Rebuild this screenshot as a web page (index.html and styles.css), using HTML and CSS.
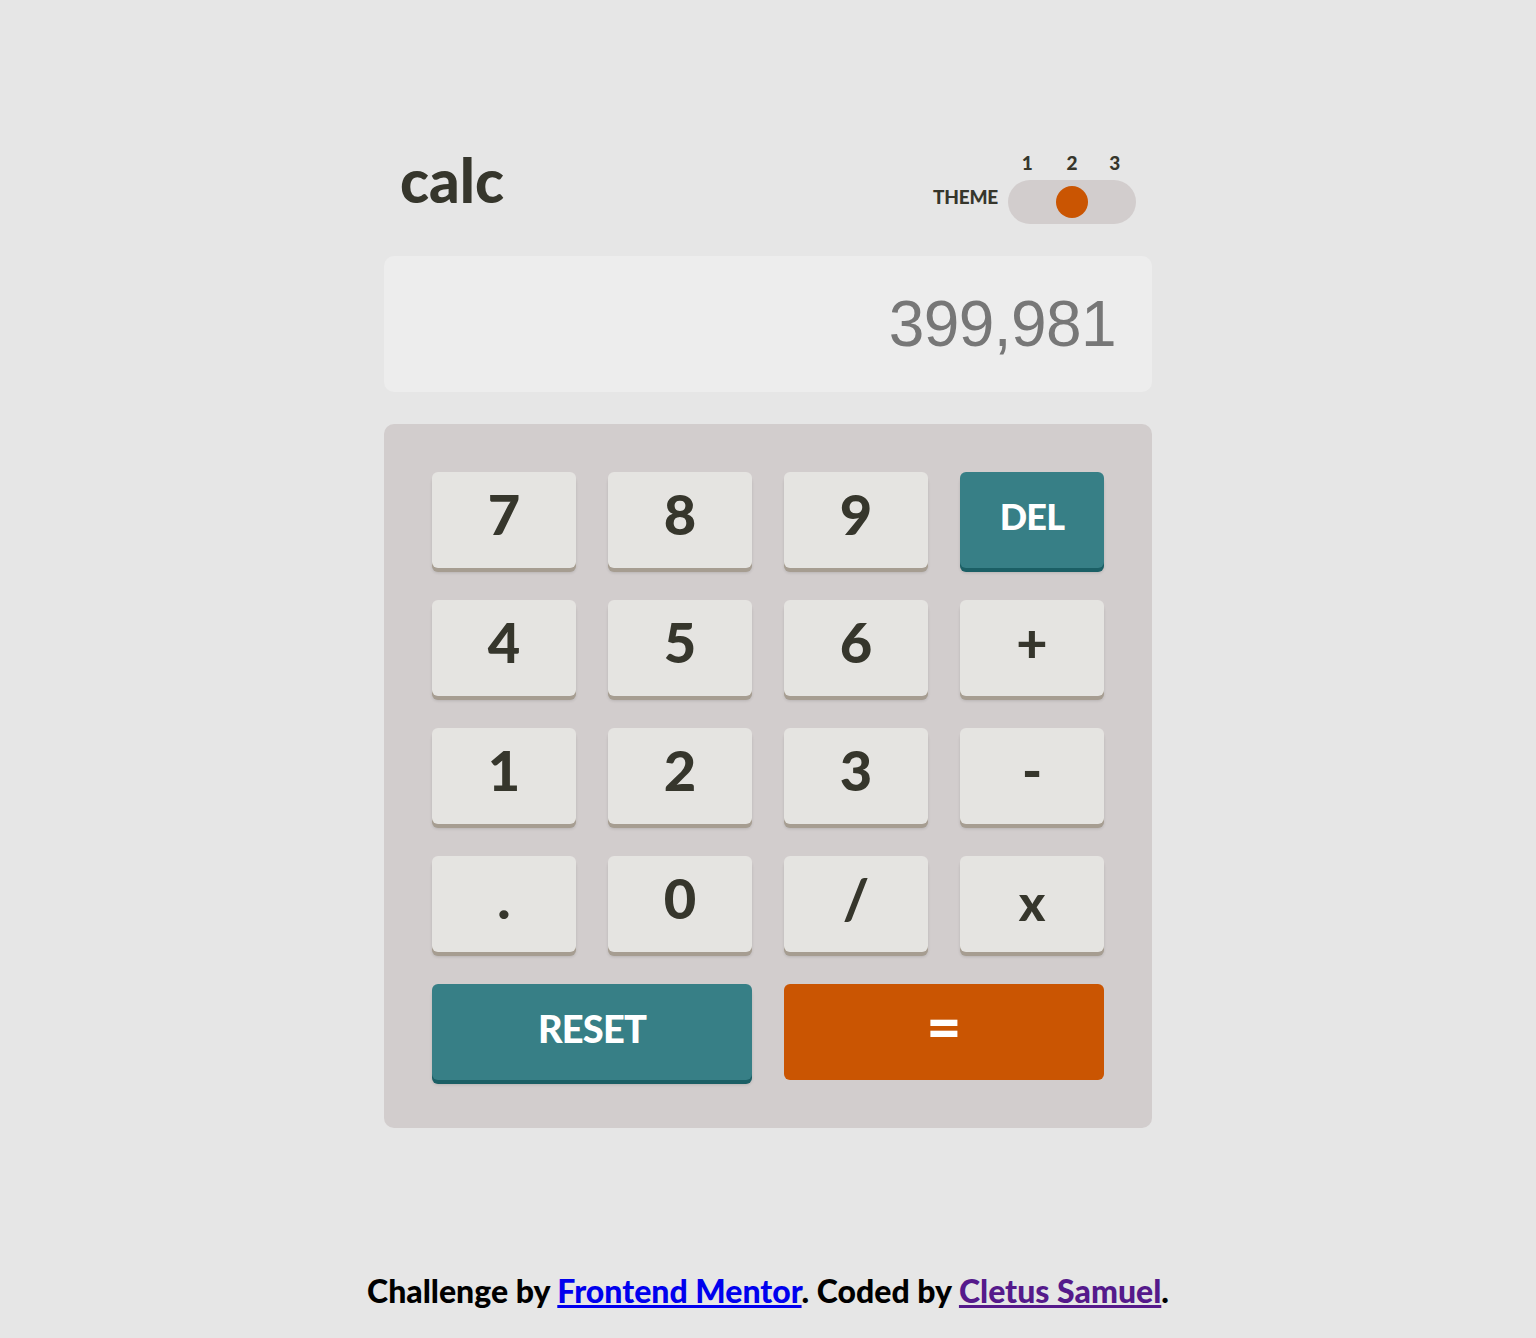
FILE: index.html
```html
<!DOCTYPE html>
<html lang="en">
<head>
<meta charset="utf-8">
<title>Calculator app</title>
<link rel="stylesheet" href="styles.css">
</head>
<body>
<main class="calc">
  <header class="top">
    <h1 class="logo">calc</h1>
    <div class="theme">
      <span class="theme-label">THEME</span>
      <div class="switch">
        <div class="switch-nums"><span>1</span><span>2</span><span>3</span></div>
        <div class="switch-track"><span class="knob"></span></div>
      </div>
    </div>
  </header>
  <section class="screen"><span class="screen-value">399,981</span></section>
  <section class="keypad">
    <button class="key">7</button>
    <button class="key">8</button>
    <button class="key">9</button>
    <button class="key key-fn key-del">DEL</button>
    <button class="key">4</button>
    <button class="key">5</button>
    <button class="key">6</button>
    <button class="key key-op">+</button>
    <button class="key">1</button>
    <button class="key">2</button>
    <button class="key">3</button>
    <button class="key key-op">-</button>
    <button class="key key-dot">.</button>
    <button class="key">0</button>
    <button class="key">/</button>
    <button class="key key-x">x</button>
    <button class="key key-fn key-wide key-reset">RESET</button>
    <button class="key key-eq key-wide">=</button>
  </section>
</main>
<footer class="attribution">
  Challenge by <a href="#" class="link-new">Frontend Mentor</a>. Coded by <a href="#" class="link-visited">Cletus Samuel</a>.
</footer>
</body>
</html>
```

FILE: styles.css
```css
* { box-sizing: border-box; }

body {
  margin: 0;
  min-height: 1338px;
  background: #e6e6e6;
  font-family: "Lato", "Noto Sans", sans-serif;
  color: #36362c;
  display: flex;
  flex-direction: column;
  align-items: center;
}

.calc {
  width: 768px;
  margin-top: 148px;
  display: flex;
  flex-direction: column;
}

.top {
  display: flex;
  justify-content: space-between;
  align-items: flex-end;
  padding: 0 16px 0 16px;
  height: 76px;
}

.logo {
  margin: 0 0 14px 0;
  font-size: 60px;
  font-weight: 900;
  line-height: 1;
  letter-spacing: 0;
}

.theme {
  display: flex;
  align-items: flex-end;
  gap: 10px;
}

.theme-label {
  font-size: 19px;
  font-weight: 900;
  letter-spacing: -0.2px;
  margin-bottom: 16px;
}

.switch {
  display: flex;
  flex-direction: column;
  gap: 8px;
}

.switch-nums {
  display: grid;
  grid-template-columns: repeat(3, 1fr);
  padding: 0 0 0 0;
  font-size: 19px;
  font-weight: 900;
  line-height: 1;
  text-align: center;
}

.switch-nums span:first-child { transform: translateX(-2px); }

.switch-track {
  width: 128px;
  height: 44px;
  border-radius: 22px;
  background: #d2cdcd;
  display: flex;
  align-items: center;
  justify-content: center;
}

.knob {
  width: 32px;
  height: 32px;
  border-radius: 50%;
  background: #ca5502;
}

.screen {
  margin-top: 32px;
  height: 136px;
  border-radius: 10px;
  background: #ededed;
  display: flex;
  align-items: center;
  justify-content: flex-end;
  padding: 0 36px 0 0;
}

.screen-value {
  font-family: "Liberation Sans", Arial, sans-serif;
  font-size: 64px;
  line-height: 1;
  letter-spacing: -0.6px;
  color: #777777;
}

.keypad {
  margin-top: 32px;
  background: #d2cdcd;
  border-radius: 10px;
  padding: 48px;
  display: grid;
  grid-template-columns: repeat(4, 144px);
  grid-auto-rows: 96px;
  gap: 32px;
}

.key {
  border: 0;
  border-radius: 6px;
  background: #e5e4e1;
  box-shadow: 0 4px 0 #a69d91, 0 5px 3px rgba(0, 0, 0, 0.12);
  font-family: "Lato", "Noto Sans", sans-serif;
  font-weight: 900;
  font-size: 56px;
  line-height: 1;
  color: #36362c;
  display: flex;
  align-items: center;
  justify-content: center;
  padding: 0 0 12px 0;
}

.key-op { font-size: 54px; }

.key-fn {
  background: #377f86;
  box-shadow: 0 4px 0 #1b5f65, 0 5px 3px rgba(0, 0, 0, 0.12);
  color: #ffffff;
  font-size: 36px;
  letter-spacing: -0.8px;
  padding: 0 0 8px 0;
}

.key-reset { font-size: 38px; }

.key-wide { grid-column: span 2; }

.key-eq {
  background: #ca5502;
  box-shadow: none;
  color: #ffffff;
  font-size: 60px;
  font-weight: 900;
  padding: 0 0 12px 0;
}

.key-x { font-size: 50px; padding: 0 0 4px 0; }

.attribution {
  margin-top: auto;
  padding-bottom: 28px;
  font-size: 32px;
  font-weight: 900;
  color: #000;
  letter-spacing: 0;
}

.link-new { color: #0000ee; }
.link-visited { color: #551a8b; }
```
